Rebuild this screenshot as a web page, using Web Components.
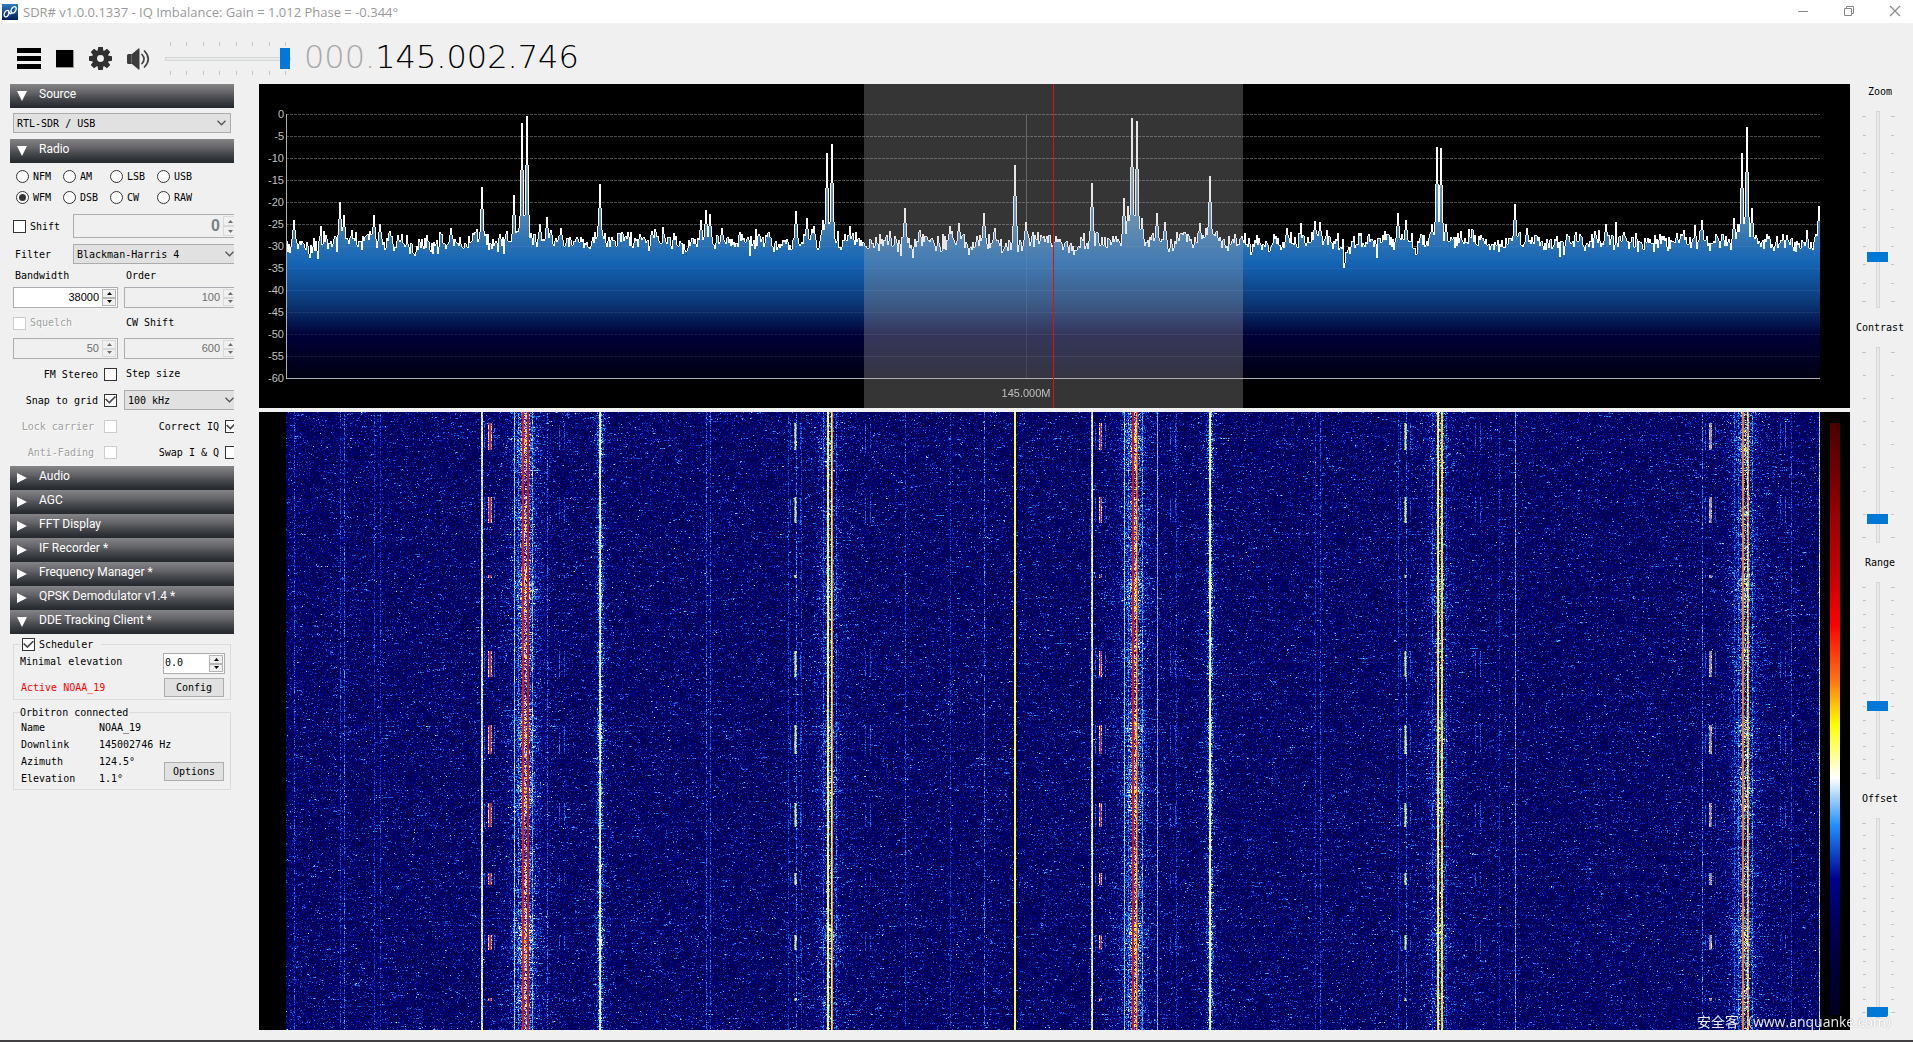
<!DOCTYPE html>
<html lang="en">
<head>
<meta charset="utf-8">
<title>SDR#</title>
<style>
  html, body { margin: 0; height: 100%; background: #f0f0f0; overflow: hidden; }
</style>
</head>
<body>
<sdr-app></sdr-app>

<template id="t-app">
  <style>
    :host { display: flex; flex-direction: column; height: 100vh; background: #f0f0f0; color: #000;
      font: 10px/13px "DejaVu Sans Mono", "Liberation Mono", monospace; position: relative; }
    main { flex: 1; display: flex; min-height: 0; }
    sdr-sidebar { flex: none; width: 224px; margin-left: 10px; }
    .views { flex: 1; min-width: 0; margin-left: 25px; display: flex; flex-direction: column; gap: 4px; }
    sdr-spectrum { flex: 324 1 0; min-height: 0; }
    sdr-waterfall { flex: 618 1 0; min-height: 0; }
    .sliders { flex: none; width: 60px; margin: 0 3px 4px 0; display: grid; grid-template-rows: repeat(4, minmax(0, 1fr)); }
    sdr-slider { min-height: 0; }
    sdr-slider:last-child { padding-bottom: 8px; }
    footer { flex: none; height: 10px; border-bottom: 2px solid #434043; }
    .mark { position: absolute; right: 13px; bottom: 9px; margin: 0; color: #fff; opacity: .92;
      font: 14px/22px "Open Sans", "Noto Sans CJK SC", sans-serif; text-shadow: 0 0 2px rgba(0,0,0,.35); }
  </style>
  <sdr-titlebar>SDR# v1.0.0.1337 - IQ Imbalance: Gain = 1.012 Phase = -0.344°</sdr-titlebar>
  <sdr-toolbar></sdr-toolbar>
  <main>
    <sdr-sidebar></sdr-sidebar>
    <div class="views"><sdr-spectrum></sdr-spectrum><sdr-waterfall></sdr-waterfall></div>
    <div class="sliders">
      <sdr-slider label="Zoom" ticks="11" value="24"></sdr-slider>
      <sdr-slider label="Contrast" ticks="9" value="10"></sdr-slider>
      <sdr-slider label="Range" ticks="15" value="36"></sdr-slider>
      <sdr-slider label="Offset" ticks="16" value="0"></sdr-slider>
    </div>
  </main>
  <footer></footer>
  <p class="mark">安全客（www.anquanke.com）</p>
</template>

<template id="t-titlebar">
  <style>
    :host { flex: none; display: flex; align-items: center; height: 23px; background: #fff; color: #999;
      font: 13px/16px "Open Sans", "Noto Sans", sans-serif; padding: 0 12px 0 2px; }
    .logo { margin-right: 5px; }
    h1 { font: inherit; margin: 0; flex: 1; }
    .win { display: flex; gap: 34px; padding-bottom: 2px; }
    button { border: 0; background: none; padding: 0; width: 12px; height: 12px; display: block; }
    svg { display: block; }
  </style>
  <svg class="logo" width="16" height="16" viewBox="0 0 16 16" aria-hidden="true">
    <defs><linearGradient id="lg" x1="0" y1="0" x2="0" y2="1"><stop offset="0" stop-color="#2f7cc0"/><stop offset="1" stop-color="#041c5c"/></linearGradient></defs>
    <rect width="16" height="16" fill="url(#lg)"/>
    <g fill="none" stroke="#fff" stroke-width="1.3">
      <ellipse cx="4.600" cy="9.600" rx="2.200" ry="3.400" transform="rotate(28 4.600 9.600)"/>
      <ellipse cx="11.600" cy="5.800" rx="2.200" ry="3.400" transform="rotate(28 11.600 5.800)"/>
      <path d="M6.600 7.600C7.400 10.400 9 10.400 9.800 8"/>
    </g>
  </svg>
  <h1><slot></slot></h1>
  <div class="win">
    <button aria-label="Minimize"><svg width="12" height="12"><path d="M1 6.500h10" stroke="#888"/></svg></button>
    <button aria-label="Restore"><svg width="12" height="12"><path d="M1.500 3.500h7v7h-7zM3.500 3.500v-2h7v7h-2" fill="none" stroke="#888"/></svg></button>
    <button aria-label="Close"><svg width="12" height="12"><path d="M1 1l10 10M11 1L1 11" stroke="#888" stroke-width="1.200"/></svg></button>
  </div>
</template>

<template id="t-toolbar">
  <style>
    :host { flex: none; box-sizing: border-box; height: 61px; padding: 10px 17px 0; display: flex; align-items: center; gap: 15px; }
    button { border: 0; background: none; padding: 0; display: block; }
    svg { display: block; }
    .vol { width: 126px; display: flex; flex-direction: column; gap: 0; }
    .ticks { display: flex; justify-content: space-between; padding: 0 5px; }
    .ticks i { width: 1px; height: 4px; background: #c4c4c4; }
    input { appearance: none; display: block; width: 100%; height: 21px; margin: 2px 0; background: none; }
    input::-webkit-slider-runnable-track { height: 4px; background: #e7eaea; border: 1px solid #d6d6d6; box-sizing: border-box; }
    input::-webkit-slider-thumb { appearance: none; width: 10px; height: 21px; margin-top: -10px; background: #0078d7; border: 0; border-radius: 0; }
    output { font: 200 32px/36px "DejaVu Sans Light", "DejaVu Sans", sans-serif; white-space: nowrap; margin: -4px 0 0 -2px; }
    .off { color: #a9a9a9; }
  </style>
  <button aria-label="Menu"><svg width="24" height="21"><path d="M0 0h24v5H0zM0 8h24v5H0zM0 16h24v5H0z"/></svg></button>
  <button aria-label="Stop"><svg width="18" height="18"><path d="M0 0h18v18H0z" fill="#a09a90"/><path d="M0 0h17v17H0z" fill="#000"/></svg></button>
  <button aria-label="Configure"><svg width="23" height="23" viewBox="-12 -12 24 24">
    <g fill="#303030">
    <path d="M-2.400-12h4.800l.7 4.500h-6.200zM-2.400 12h4.800l.7-4.500h-6.200zM-12-2.400v4.800l4.500.7v-6.200zM12-2.400v4.800l-4.500.7v-6.200z"/>
    <path transform="rotate(45)" d="M-2.400-12h4.800l.7 4.500h-6.200zM-2.400 12h4.800l.7-4.500h-6.200zM-12-2.400v4.800l4.500.7v-6.200zM12-2.400v4.800l-4.500.7v-6.200z"/>
    <path fill-rule="evenodd" d="M0-8.700a8.700 8.700 0 1 0 0 17.400a8.700 8.700 0 1 0 0-17.400zM0-3.600a3.600 3.600 0 1 1 0 7.200a3.600 3.600 0 1 1 0-7.200z"/></g></svg></button>
  <button aria-label="Mute"><svg width="23" height="22" viewBox="0 0 23 22">
    <path d="M0 7.500q0-1.500 1.500-1.500H5l6.500-5.500q1-.6 1 .6v19.800q0 1.200-1 .6L5 16H1.500Q0 16 0 14.500z" fill="#3c3c3c"/><path d="M4.500 6.500v9" stroke="#888" stroke-width=".6"/>
    <path d="M15 6.500q4 4.500 0 9M17.500 3q7.500 8 0 16" fill="none" stroke="#444" stroke-width="1.700" stroke-linecap="round"/></svg></button>
  <div class="vol">
    <div class="ticks"><i></i><i></i><i></i><i></i><i></i><i></i><i></i><i></i></div>
    <input type="range" aria-label="Volume" min="0" max="100" value="100">
    <div class="ticks"><i></i><i></i><i></i><i></i><i></i><i></i><i></i><i></i></div>
  </div>
  <output aria-label="Frequency"><span class="off">000.</span><span>145.002.746</span></output>
</template>

<template id="t-panel">
  <style>
    :host { display: block; }
    header { height: 24px; display: flex; align-items: center; padding-left: 7px; gap: 12px; box-sizing: border-box;
      color: #fff; background: linear-gradient(#848486 0%, #66666a 35%, #4d4e52 55%, #34373c 80%, #24282d 100%); }
    svg { flex: none; }
    :host([open]) svg { transform: rotate(90deg); }
    h2 { margin: 0 0 4px; font: 12px/16px Roboto, "Open Sans", sans-serif; }
  </style>
  <header><svg width="10" height="10"><path d="M0 0L10 5L0 10z" fill="#fff"/></svg><h2></h2></header>
  <slot></slot>
</template>

<template id="t-spin">
  <style>
    :host { display: flex; box-sizing: border-box; height: 21px; border: 1px solid #abadb3; background: #fff; padding: 1px; color: #000; }
    :host([disabled]) { background: #f0f0f0; color: #6d6d6d; }
    ::slotted(input) { flex: 1; min-width: 0; border: 0; padding: 0 3px 0 0; margin: 0; background: none; text-align: right; color: inherit;
      font: 11px/14px "Liberation Sans", Arial, sans-serif; height: 15px; outline: 0; }
    :host([start]) ::slotted(input) { text-align: left; font: 10px/14px "DejaVu Sans Mono", monospace; }
    :host([big]) { height: 24px; }
    :host([big]) ::slotted(input) { font: bold 16px/20px "Liberation Sans", Arial, sans-serif; height: 20px; color: #7a7f86; }
    div { flex: none; width: 14px; display: flex; flex-direction: column; }
    button { flex: 1; padding: 0; border: 1px solid #b4b4b4; background: #f0f0f0; display: grid; place-items: center; min-height: 0; color: inherit; }
    :host([disabled]) button { border-color: #d9d9d9; }
    svg { display: block; fill: currentColor; }
  </style>
  <slot></slot>
  <div><button aria-label="Increase"><svg width="5" height="3"><path d="M0 3L2.500 0L5 3z"/></svg></button><button aria-label="Decrease"><svg width="5" height="3"><path d="M0 0L2.500 3L5 0z"/></svg></button></div>
</template>

<template id="t-combo">
  <style>
    :host { display: grid; height: 20px; align-items: center; }
    ::slotted(select) { grid-area: 1/1; appearance: none; width: 100%; height: 20px; border: 1px solid #acacac; border-radius: 0; background: #e1e1e1;
      padding: 0 18px 0 3px; margin: 0; color: #000; font: inherit; }
    svg { grid-area: 1/1; justify-self: end; margin-right: 5px; pointer-events: none; z-index: 1; }
  </style>
  <slot></slot><svg width="9" height="6"><path d="M.5.800L4.500 4.800L8.500.800" fill="none" stroke="#555" stroke-width="1.300"/></svg>
</template>

<template id="t-slider">
  <style>
    :host { display: flex; flex-direction: column; align-items: center; box-sizing: border-box; padding: 1px 0 12px; }
    label { margin-bottom: 13px; }
    .row { flex: 1; display: flex; min-height: 0; justify-content: center; margin-right: 4px; }
    .ticks { display: flex; flex-direction: column; justify-content: space-between; padding: 5px 0; width: 4px; align-items: flex-end; }
    .ticks:last-child { align-items: flex-start; }
    .ticks i { width: 3px; height: 1px; background: #c4c4c4; }
    .ticks i:first-child, .ticks i:last-child { width: 4px; }
    input { appearance: none; writing-mode: vertical-lr; direction: rtl; width: 21px; height: 100%; margin: 0 2px; background: none; }
    input::-webkit-slider-runnable-track { width: 4px; background: #e7eaea; border: 1px solid #d6d6d6; box-sizing: border-box; }
    input::-webkit-slider-thumb { appearance: none; width: 21px; height: 10px; margin-left: -10px; margin-right: -10px; background: #0078d7; border: 0; border-radius: 0; }
  </style>
  <label for="r"></label>
  <div class="row"><div class="ticks"></div><input id="r" type="range" min="0" max="100"><div class="ticks"></div></div>
</template>

<template id="t-sidebar">
  <style>
    :host { display: block; overflow: hidden; }
    .src { padding: 5px 3px 6px; }
    .radio { width: 226px; padding: 3px 0 1px 3px; display: grid; grid-template-columns: 105px 115px; column-gap: 6px; align-items: center; }
    .wide { grid-column: 1 / 3; }
    .modes { display: grid; grid-template-columns: repeat(4, 47px); grid-auto-rows: 21px; align-items: center; padding-left: 3px; border: 0; margin: 0; }
    .modes label { display: flex; align-items: center; gap: 4px; }
    .pair { display: grid; grid-template-columns: 60px minmax(0, 1fr); align-items: center; }
    .shift { margin-top: 6px; }
    .filter { margin-top: 6px; }
    .cap { padding-left: 2px; line-height: 23px; }
    .tall { line-height: 30px; }
    .t26 { line-height: 26px; }
    .ck { display: flex; align-items: center; gap: 4px; }
    .end { justify-content: flex-end; gap: 6px; height: 26px; padding-right: 1px; }
    .gap { margin-top: 2px; }
    .dim { color: #a0a0a0; text-shadow: 1px 1px #fff; }
    .end.dim { gap: 10px; }
    input[type=checkbox], input[type=radio] { appearance: none; flex: none; width: 13px; height: 13px; margin: 0; border: 1px solid #333; background: #fff; display: grid; place-items: center; }
    input[type=radio] { border-radius: 50%; }
    input[type=radio]:checked::before { content: ""; width: 7px; height: 7px; border-radius: 50%; background: #333; }
    input[type=checkbox]:checked::before { content: ""; width: 11px; height: 8px; background: #444; clip-path: polygon(0 45%, 12% 32%, 38% 68%, 90% 0, 100% 12%, 40% 98%); }
    input[type=checkbox]:disabled { border-color: #ccc; }
    fieldset.box { margin: 4px 3px 0; border: 1px solid #dcdcdc; padding: 2px 5px 2px 6px; min-width: 0; }
    fieldset.box + fieldset.box { margin-top: 6px; padding-top: 0; }
    .box legend { padding: 0 8px 0 2px; height: 13px; }
    .box .t { padding: 0 1px 0 0; }
    .line { display: flex; justify-content: space-between; align-items: center; }
    .line + .line { margin-top: 4px; }
    .line sdr-spin { width: 62px; }
    .line label { margin-bottom: 4px; }
    .box button { width: 60px; height: 19px; box-sizing: border-box; border: 1px solid #adadad; background: #e1e1e1; padding: 0; font: inherit; color: #000; border-radius: 0; margin-right: 1px; }
    .red { color: #f00; padding-left: 1px; }
    dl { margin: 0 0 0 1px; display: grid; grid-template-columns: 78px auto; grid-auto-rows: 17px; align-items: center; }
    dd { margin: 0; white-space: nowrap; }
    .orb { display: grid; grid-template-columns: 1fr; }
    .orb dl, .orb button { grid-area: 1/1; }
    .orb button { justify-self: end; align-self: end; margin-bottom: 6px; }
  </style>
  <sdr-panel open heading="Source">
    <div class="src"><sdr-combo><select aria-label="Source"><option>RTL-SDR / USB</option></select></sdr-combo></div>
  </sdr-panel>
  <sdr-panel open heading="Radio">
    <div class="radio">
      <div class="modes wide" role="radiogroup" aria-label="Mode">
        <label><input type="radio" name="m">NFM</label><label><input type="radio" name="m">AM</label><label><input type="radio" name="m">LSB</label><label><input type="radio" name="m">USB</label>
        <label><input type="radio" name="m" checked>WFM</label><label><input type="radio" name="m">DSB</label><label><input type="radio" name="m">CW</label><label><input type="radio" name="m">RAW</label>
      </div>
      <div class="pair wide shift"><label class="ck"><input type="checkbox">Shift</label><sdr-spin big disabled><input aria-label="Shift value" value="0" disabled></sdr-spin></div>
      <div class="pair wide filter"><label for="flt" style="padding-left:2px">Filter</label><sdr-combo><select id="flt"><option>Blackman-Harris 4</option></select></sdr-combo></div>
      <label class="cap" for="bw">Bandwidth</label><label class="cap" for="ord">Order</label>
      <sdr-spin><input id="bw" value="38000"></sdr-spin><sdr-spin disabled><input id="ord" value="100" disabled></sdr-spin>
      <label class="ck tall dim"><input type="checkbox" disabled>Squelch</label><label class="cap tall" for="cws">CW Shift</label>
      <sdr-spin disabled><input aria-label="Squelch level" value="50" disabled></sdr-spin><sdr-spin disabled><input id="cws" value="600" disabled></sdr-spin>
      <label class="ck end gap">FM Stereo<input type="checkbox"></label><label class="cap t26 gap" for="stp">Step size</label>
      <label class="ck end">Snap to grid<input type="checkbox" checked></label><sdr-combo><select id="stp"><option>100 kHz</option></select></sdr-combo>
      <label class="ck end dim">Lock carrier<input type="checkbox" disabled></label><label class="ck end">Correct IQ<input type="checkbox" checked></label>
      <label class="ck end dim">Anti-Fading<input type="checkbox" disabled></label><label class="ck end">Swap I &amp; Q<input type="checkbox"></label>
    </div>
  </sdr-panel>
  <sdr-panel heading="Audio"></sdr-panel>
  <sdr-panel heading="AGC"></sdr-panel>
  <sdr-panel heading="FFT Display"></sdr-panel>
  <sdr-panel heading="IF Recorder *"></sdr-panel>
  <sdr-panel heading="Frequency Manager *"></sdr-panel>
  <sdr-panel heading="QPSK Demodulator v1.4 *"></sdr-panel>
  <sdr-panel open heading="DDE Tracking Client *">
    <fieldset class="box">
      <legend><label class="ck"><input type="checkbox" checked>Scheduler</label></legend>
      <div class="line"><label for="el">Minimal elevation</label><sdr-spin start><input id="el" value="0.0"></sdr-spin></div>
      <div class="line"><span class="red">Active NOAA_19</span><button>Config</button></div>
    </fieldset>
    <fieldset class="box">
      <legend class="t">Orbitron connected</legend>
      <div class="orb">
        <dl><dt>Name</dt><dd>NOAA_19</dd><dt>Downlink</dt><dd>145002746 Hz</dd><dt>Azimuth</dt><dd>124.5°</dd><dt>Elevation</dt><dd>1.1°</dd></dl>
        <button>Options</button>
      </div>
    </fieldset>
  </sdr-panel>
</template>

<template id="t-spectrum">
  <style>
    :host { display: grid; grid-template: 30px minmax(0, 1fr) 30px / 27px minmax(0, 1fr) 30px; background: #000; color: #c0c0c0;
      font: 11px/12px "Liberation Sans", Arial, sans-serif; }
    .scale { grid-area: 2/1; margin: -6px 0; padding-right: 2px; display: flex; flex-direction: column; justify-content: space-between; text-align: right; }
    .plot { grid-area: 1/2/4/3; position: relative; min-height: 0; }
    canvas { display: block; position: absolute; inset: 0; width: 100%; height: 100%; }
    .pin { position: absolute; left: 48.24%; bottom: 9px; transform: translateX(-50%); }
  </style>
  <div class="scale"></div>
  <div class="plot"><canvas></canvas><span class="pin">145.000M</span></div>
</template>

<template id="t-waterfall">
  <style>
    :host { display: grid; grid-template: minmax(0, 1fr) / 27px minmax(0, 1fr) 30px; background: #000; }
    .plot { grid-column: 2; position: relative; }
    canvas { display: block; position: absolute; inset: 0; width: 100%; height: 100%; }
    .bar { grid-column: 3; width: 10px; margin: 11px auto 15px; background: linear-gradient(#4a0000 0%, #750000 9%, #9f0000 17%, #c60000 26%, #ff0000 34%, #fe6d16 43%, #ffff00 51%, #ffffff 60%, #1e90ff 68%, #000091 77%, #000050 86%, #000030 94%, #000022 100%); }
  </style>
  <div class="plot"><canvas></canvas></div><div class="bar"></div>
</template>

<script>
const el = (name, setup) => customElements.define('sdr-' + name, class extends HTMLElement {
  constructor() {
    super();
    this.attachShadow({ mode: 'open' }).append(document.getElementById('t-' + name).content.cloneNode(true));
  }
  connectedCallback() { if (setup) setup(this, this.shadowRoot); }
});
const rng = seed => () => {
  seed = (seed + 0x6D2B79F5) | 0;
  let t = Math.imul(seed ^ (seed >>> 15), 1 | seed);
  t = (t + Math.imul(t ^ (t >>> 7), 61 | t)) ^ t;
  return ((t ^ (t >>> 14)) >>> 0) / 4294967296;
};
const SPAN = 1534; // bins across the band

// [bin, dB]
const PEAKS = [[8,-24],[54,-20],[58,-23],[88,-23],[94,-25],[165,-26],[196,-16.5],[228,-18.5],[236,-2],[241,-.4],[254,-25],[261,-23.3],[275,-26],
  [314,-16],[415,-24.2],[420,-21.8],[424,-22.7],[436,-26],[510,-22],[521,-23.7],[528,-25.5],[537,-24],[541,-8.8],[546,-6.8],
  [619,-21.4],[664,-25.5],[673,-24.8],[698,-22.5],[729,-11.5],[740,-24.6],[806,-15.7],[838,-19],[842,-21],[846,-.9],[851,-1.6],
  [856,-23.7],[871,-22.5],[879,-24.5],[924,-14],[1001,-26],[1029,-24.3],[1034,-24.6],[1112,-22.6],[1120,-24],[1146,-25],[1151,-7.4],[1155,-7.8],
  [1160,-25],[1229,-20.4],[1241,-26],[1320,-25],[1416,-24],[1448,-23.6],[1452,-25],[1456,-8.8],[1461,-3],[1466,-21.4],[1533,-20.8]];
const HUMPS = [[238,-25,9],[314,-25,6],[544,-26.5,7],[849,-25,9],[924,-25,6],[1153,-26.5,6],[1458,-25.5,8]];

const watch = (host, canvas, draw) => {
  const run = () => {
    const w = canvas.clientWidth, h = canvas.clientHeight;
    if (!w || !h || (canvas.width === w && canvas.height === h && canvas.done)) return;
    canvas.width = w; canvas.height = h; canvas.done = true;
    draw(canvas.getContext('2d'), w, h);
  };
  new ResizeObserver(run).observe(canvas);
  run();
};

el('titlebar'); el('toolbar'); el('spin'); el('combo');
el('panel', (h, r) => { r.querySelector('h2').textContent = h.getAttribute('heading'); });
el('slider', (h, r) => {
  r.querySelector('label').textContent = h.getAttribute('label');
  r.querySelectorAll('.ticks').forEach(t => { t.innerHTML = '<i></i>'.repeat(+h.getAttribute('ticks')); });
  r.querySelector('input').value = h.getAttribute('value');
});
el('sidebar');

el('spectrum', (host, r) => {
  const sc = r.querySelector('.scale');
  for (let d = 0; d >= -60; d -= 5) { const s = document.createElement('span'); s.textContent = d; sc.append(s); }
  watch(host, r.querySelector('canvas'), (c, w, h) => {
    const top = 30, bot = h - 30, H = bot - top, kx = w / SPAN, rand = rng(77);
    const grid = color => {
      c.fillStyle = color;
      for (let i = 0; i < 12; i++) {
        const y = Math.round(top + H * i / 12);
        for (let x = 0; x < w; x += 4) c.fillRect(x, y, 3, 1);
      }
      c.fillRect(Math.round(740 * kx), top, 1, H);
    };
    c.fillStyle = '#000'; c.fillRect(0, 0, w, h);
    grid('#4c4c4c');
    const ys = []; let slow = 0;
    for (let x = 0; x <= w; x++) {
      const b = x / kx;
      slow = slow * .66 + (rand() - .5) * 2.1;
      let v = -29 + slow + (rand() - .5) * 2.9;
      if (rand() < .025) v -= 3 * rand() + .5;
      if (rand() < .03) v += 2 * rand() + .5;
      for (const [p, d, s] of HUMPS) { const q = Math.abs(b - p); if (q < s * 1.6) v = Math.max(v, d - q * 3.5 / s + (rand() - .5) * 2.5); }
      for (const [p, d] of PEAKS) { const q = Math.abs(b - p); if (q < 4) v = Math.max(v, d - q * (d + 30) * .38); }
      ys.push(Math.round(top - v / 60 * H));
    }
    const g = c.createLinearGradient(0, top, 0, bot);
    [[0,'#a8aeb0'],[.25,'#7699ab'],[.42,'#427eb2'],[.565,'#1464b4'],[.72,'#0b3674'],[.84,'#000036'],[1,'#000012']].forEach(s => g.addColorStop(...s));
    c.fillStyle = g;
    for (let x = 0; x < w; x++) c.fillRect(x, ys[x], 1, bot - ys[x]);
    c.save(); c.beginPath();
    for (let x = 0; x < w; x++) c.rect(x, ys[x], 1, bot - ys[x]);
    c.clip(); grid('rgba(170,180,220,.14)'); c.restore();
    c.fillStyle = '#fff';
    for (let x = 0; x < w; x++) { const a = Math.min(ys[x], ys[x + 1]), b = Math.max(ys[x], ys[x + 1]); c.fillRect(x, a, 1, Math.max(1, b - a)); }
    c.fillStyle = '#b0b0b0'; c.fillRect(0, top, 1, H); c.fillRect(0, bot, w, 1);
    c.fillStyle = 'rgba(173,173,173,.306)'; c.fillRect(Math.round(578 * kx), 0, Math.round(379 * kx), h);
    c.fillStyle = '#e01010'; c.fillRect(Math.round(767 * kx), 0, 1, h);
  });
});

// [bin, level on the palette, width, spread]
const LINES = [[8,3.5,1],[54,3.3,1],[58,3.7,1],[88,3.3,1],[94,3.2,1],[195,4.8,2],[228,4.5,1],[232,3.9,1],[236,7.9,2],[241,8.2,2],[246,4.2,1],[261,3.6,1],
  [313,4.7,1,1.6],[314,5.2,1,1.6],[420,3.6,1],[424,3.5,1],[502,3.3,1],[510,3.7,1],[515,3.2,1],[537,3.6,1],[541,5.8,1,1.6],[542,5.2,1,1.6],[545,5.9,1,1.2],[546,6.8,1,.6],[550,3.7,1],
  [619,3.5,1],[664,3.2,1],[698,3.8,1],[728,5.8,2,.3],[805,4.6,1],[806,5.1,1],[838,4.5,1],[842,3.9,1],[846,8.1,2],[850,6.4,1,2],[851,7.7,1],[856,4.1,1],[871,4.3,1],[890,3.2,1],
  [923,5,1,1.6],[924,5.4,1,1.2],[1029,3.2,1],[1034,3.5,1],[1112,3.4,1],[1120,3.7,1],[1146,3.6,1],[1151,6.2,1,1],[1152,5.4,1,1.6],[1155,6.2,2,1.2],[1160,3.4,1],[1213,3.1,1],
  [1229,4.1,1],[1416,3.9,1],[1448,3.5,1],[1452,3.8,1],[1456,6.9,2],[1461,6,1,2.4],[1462,6.6,1,1.2],[1466,3.9,1],[1505,3.4,1],[1533,4.6,1]];
const SKIRTS = [[239,3.3,8],[314,2.7,3],[543,1.7,8],[848,3.1,8],[924,2.8,3],[1153,1.7,8],[1458,2.3,9]];
// [bin, level, width]
const BURSTS = [[203,8,2],[509,6.2,1],[814,8,1],[1119,6.2,1],[1424,6.9,1]];
const TIMES = [[11,38],[85,111],[163,166],[239,265],[313,342],[391,415],[461,473],[523,538],[586,589]];
const PAL = [[0,0,32],[0,0,48],[0,0,80],[0,0,145],[30,144,255],[255,255,255],[255,255,0],[254,109,22],[255,0,0],[198,0,0]];

el('waterfall', (host, r) => watch(host, r.querySelector('canvas'), (c, w, h) => {
  const img = c.createImageData(w, h), D = img.data, rand = rng(2024), kx = w / SPAN;
  const base = new Float32Array(w), skirt = new Float32Array(w), solid = new Float32Array(w), spread = new Float32Array(w);
  for (let x = 0; x < w; x++) {
    const b = x / kx;
    for (const [p, a, s] of SKIRTS) { const q = Math.abs(b - p); if (q < s * 6) skirt[x] += a * Math.exp(-q / s); }
    base[x] = (rand() - .5) * .12;
  }
  for (const [p, v, n, k] of LINES) for (let i = 0; i < n; i++) {
    const x = Math.min(w - 1, Math.round(p * kx) + i);
    solid[x] = v; spread[x] = k || (v < 4.3 ? 1.5 : v < 5.7 ? .9 : .45);
  }
  const row = new Float32Array(w);
  for (let y = 0; y < h; y++) {
    const streak = rand(), pulse = .62 + .3 * Math.sin(y / 16) * Math.sin(y / 37) + .5 * streak;
    const band = (y % 32 === 26 || y % 97 === 28) ? .35 : 0;
    let hold = 0;
    for (let x = 0; x < w; x++) {
      if (rand() < .55) hold = rand() < .14 ? rand() * 1.25 : 0;
      let v = 2.25 + base[x] + (rand() + rand() + rand() - 1.5) * 1.1 + hold + band * rand() * 1.5;
      if (skirt[x]) v += skirt[x] * pulse * (.25 + rand() * .95);
      if (solid[x]) {
        const s = solid[x];
        if (s < 4 && rand() < .35) v = Math.max(v, 2.6 + rand()); else v = Math.max(Math.min(v, 5.5), s + (rand() - .5) * spread[x]);
      }
      row[x] = v;
    }
    if (TIMES.some(([a, b]) => y >= a && y < b)) for (const [p, v, n] of BURSTS) {
      const x = Math.round(p * kx);
      for (let i = 0; i < n; i++) row[x + i] = v - i * .2;
      row[x - 1] = Math.max(row[x - 1], 3.5 + rand() * (v - 4) * .5);
      row[x + n] = 3.4 + rand() * 1.6;
      for (const o of [-5, 5, 70, 75]) if (x + o < w) row[x + o] = Math.max(row[x + o], 2.8 + rand() * 1.3);
    }
    for (let x = 0; x < w; x++) {
      const v = Math.max(0, Math.min(8.6, row[x])), i = v | 0, f = v - i, A = PAL[i], B = PAL[i + 1], o = (y * w + x) * 4;
      D[o] = A[0] + (B[0] - A[0]) * f; D[o + 1] = A[1] + (B[1] - A[1]) * f; D[o + 2] = A[2] + (B[2] - A[2]) * f; D[o + 3] = 255;
    }
  }
  c.putImageData(img, 0, 0);
}));
el('app');
</script>
</body>
</html>
